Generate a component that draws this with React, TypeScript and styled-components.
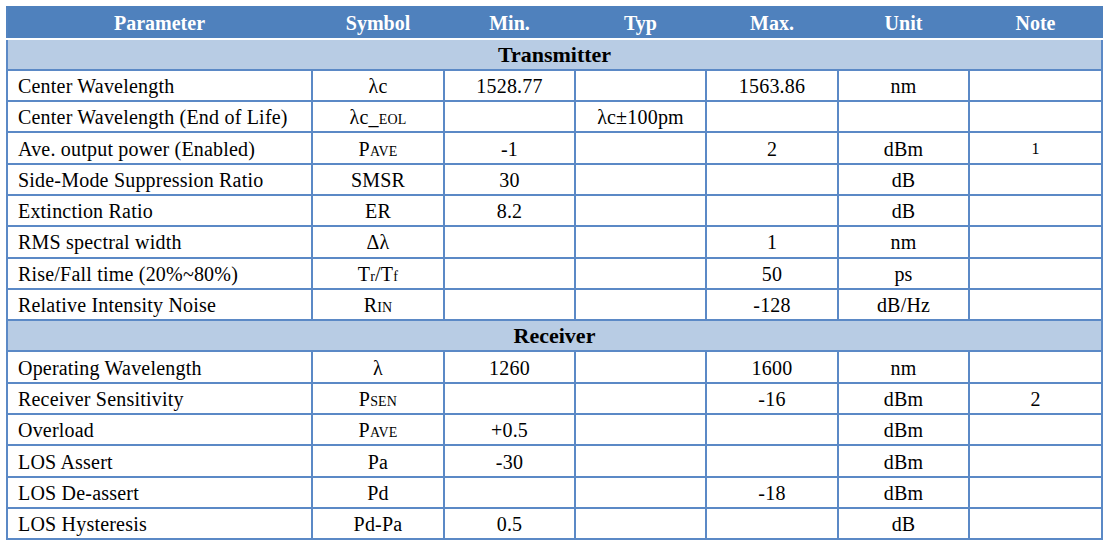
import React from "react";
import styled, { createGlobalStyle } from "styled-components";

const Global = createGlobalStyle`
  html, body { margin: 0; padding: 0; background: #fff; }
  body { font-family: "Liberation Serif", "Times New Roman", serif; }
`;

const Page = styled.div`
  padding: 6px 0 0 6px;
`;

const Table = styled.table`
  border-collapse: collapse;
  table-layout: fixed;
  width: 1095px;
  font-family: "Liberation Serif", "Times New Roman", serif;
  font-size: 20px;
  letter-spacing: 0.2px;
  color: #000;
`;

const HeadRow = styled.tr`
  height: 31.5px;
  background: #4f81bd;
`;

const HeadCell = styled.th`
  color: #fff;
  font-weight: bold;
  font-size: 20px;
  letter-spacing: 0;
  text-align: center;
  padding: 1px 0 0;
  border: 2px solid #4f81bd;
  border-bottom: 2px solid #fff;
  border-left-color: #5283c0;
`;

const SectionRow = styled.tr`
  height: 31.3px;
  background: #b8cce4;
`;

const SectionCell = styled.td`
  font-weight: bold;
  font-size: 22px;
  letter-spacing: 0;
  text-align: center;
  padding: 1px 0 0;
  border: 2px solid #5b89c6;
  border-top: 2px solid #fff;
`;

const Row = styled.tr`
  height: 31.3px;
`;

const Cell = styled.td<{ $left?: boolean; $small?: boolean }>`
  border: 2px solid #5b89c6;
  padding: 1px 0 0 ${(p) => (p.$left ? "10px" : "0")};
  text-align: ${(p) => (p.$left ? "left" : "center")};
  font-size: ${(p) => (p.$small ? "16px" : "inherit")};
  white-space: nowrap;
  line-height: 1;
`;

const Sub = styled.span`
  font-size: 0.7em;
`;

type R = [React.ReactNode, React.ReactNode, string, string, string, string, string];

const P = (s: string) => (
  <>
    P<Sub>{s}</Sub>
  </>
);

const tx: R[] = [
  ["Center Wavelength", "λc", "1528.77", "", "1563.86", "nm", ""],
  [
    "Center Wavelength (End of Life)",
    <>
      λc_<Sub>EOL</Sub>
    </>,
    "",
    "λc±100pm",
    "",
    "",
    "",
  ],
  ["Ave. output power (Enabled)", P("AVE"), "-1", "", "2", "dBm", "1"],
  ["Side-Mode Suppression Ratio", "SMSR", "30", "", "", "dB", ""],
  ["Extinction Ratio", "ER", "8.2", "", "", "dB", ""],
  ["RMS spectral width", "Δλ", "", "", "1", "nm", ""],
  [
    "Rise/Fall time (20%~80%)",
    <>
      T<Sub>r</Sub>/T<Sub>f</Sub>
    </>,
    "",
    "",
    "50",
    "ps",
    "",
  ],
  [
    "Relative Intensity Noise",
    <>
      R<Sub>IN</Sub>
    </>,
    "",
    "",
    "-128",
    "dB/Hz",
    "",
  ],
];

const rx: R[] = [
  ["Operating Wavelength", "λ", "1260", "", "1600", "nm", ""],
  ["Receiver Sensitivity", P("SEN"), "", "", "-16", "dBm", "2"],
  ["Overload", P("AVE"), "+0.5", "", "", "dBm", ""],
  ["LOS Assert", "Pa", "-30", "", "", "dBm", ""],
  ["LOS De-assert", "Pd", "", "", "-18", "dBm", ""],
  ["LOS Hysteresis", "Pd-Pa", "0.5", "", "", "dB", ""],
];

const widths = [305, 132, 131, 131, 132, 131, 133];

const Body = ({ rows }: { rows: R[] }) => (
  <>
    {rows.map((r, i) => (
      <Row key={i}>
        {r.map((c, j) => (
          <Cell key={j} $left={j === 0} $small={j === 6 && c === "1"}>
            {c}
          </Cell>
        ))}
      </Row>
    ))}
  </>
);

export default function App() {
  return (
    <>
      <Global />
      <Page>
        <Table>
          <colgroup>
            {widths.map((w, i) => (
              <col key={i} style={{ width: w }} />
            ))}
          </colgroup>
          <thead>
            <HeadRow>
              {["Parameter", "Symbol", "Min.", "Typ", "Max.", "Unit", "Note"].map((h) => (
                <HeadCell key={h}>{h}</HeadCell>
              ))}
            </HeadRow>
          </thead>
          <tbody>
            <SectionRow>
              <SectionCell colSpan={7}>Transmitter</SectionCell>
            </SectionRow>
            <Body rows={tx} />
            <SectionRow>
              <SectionCell colSpan={7}>Receiver</SectionCell>
            </SectionRow>
            <Body rows={rx} />
          </tbody>
        </Table>
      </Page>
    </>
  );
}
